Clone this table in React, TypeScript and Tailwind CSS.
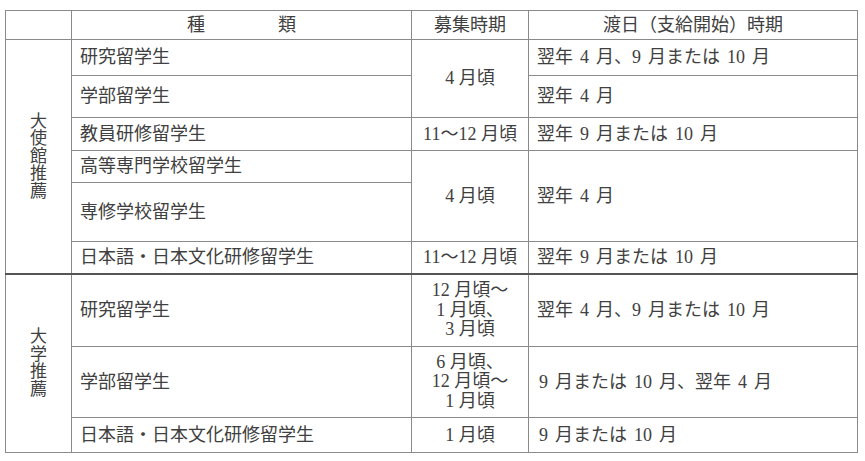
import React from "react";

const cell = "border border-[#8a8a8a] px-2 py-0 align-middle font-normal";
const center = `${cell} text-center`;
const date = `${cell} [word-spacing:2.5px]`;
const divider = "border-t-2 border-t-[#555]";

const Vertical = ({ text }: { text: string }) => (
    <div className="flex flex-col items-center text-[17px] leading-[17.5px]">
        {text.split("").map((c, i) => (
            <span key={i}>{c}</span>
        ))}
    </div>
);

const Lines = ({ lines }: { lines: string[] }) => (
    <div className="flex flex-col items-center leading-[19.5px]">
        {lines.map((l, i) => (
            <span key={i}>{l}</span>
        ))}
    </div>
);

export default function App() {
    return (
        <div className="w-[865px] h-[461px] bg-white pt-[10px] pl-[5px] text-[18px] text-[#404040] [font-family:'Liberation_Serif','Noto_Sans_CJK_JP',serif]">
            <table className="table-fixed border-collapse w-[852px]">
                <colgroup>
                    <col className="w-[66px]" />
                    <col className="w-[340px]" />
                    <col className="w-[117px]" />
                    <col className="w-[329px]" />
                </colgroup>
                <thead>
                    <tr className="h-[29px]">
                        <th className={cell}></th>
                        <th className={center}>
                            <div className="flex justify-center gap-[73px] leading-none">
                                <span>種</span>
                                <span>類</span>
                            </div>
                        </th>
                        <th className={`${center} px-0`}>募集時期</th>
                        <th className={center}>渡日（支給開始）時期</th>
                    </tr>
                </thead>
                <tbody>
                    <tr className="h-[36px]">
                        <td className={center} rowSpan={6}>
                            <Vertical text="大使館推薦" />
                        </td>
                        <td className={cell}>研究留学生</td>
                        <td className={center} rowSpan={2}>4 月頃</td>
                        <td className={date}>翌年 4 月、9 月または 10 月</td>
                    </tr>
                    <tr className="h-[42px]">
                        <td className={cell}>学部留学生</td>
                        <td className={date}>翌年 4 月</td>
                    </tr>
                    <tr className="h-[33px]">
                        <td className={cell}>教員研修留学生</td>
                        <td className={`${center} px-0 whitespace-nowrap`}>11～12 月頃</td>
                        <td className={date}>翌年 9 月または 10 月</td>
                    </tr>
                    <tr className="h-[32px]">
                        <td className={cell}>高等専門学校留学生</td>
                        <td className={center} rowSpan={2}>4 月頃</td>
                        <td className={date} rowSpan={2}>翌年 4 月</td>
                    </tr>
                    <tr className="h-[59px]">
                        <td className={cell}>専修学校留学生</td>
                    </tr>
                    <tr className="h-[32px]">
                        <td className={cell}>日本語・日本文化研修留学生</td>
                        <td className={`${center} px-0 whitespace-nowrap`}>11～12 月頃</td>
                        <td className={date}>翌年 9 月または 10 月</td>
                    </tr>
                    <tr className="h-[73px]">
                        <td className={`${center} ${divider}`} rowSpan={3}>
                            <Vertical text="大学推薦" />
                        </td>
                        <td className={`${cell} ${divider}`}>研究留学生</td>
                        <td className={`${center} ${divider} px-0`}>
                            <Lines lines={["12 月頃～", "1 月頃、", "3 月頃"]} />
                        </td>
                        <td className={`${date} ${divider}`}>翌年 4 月、9 月または 10 月</td>
                    </tr>
                    <tr className="h-[71px]">
                        <td className={cell}>学部留学生</td>
                        <td className={`${center} px-0`}>
                            <Lines lines={["6 月頃、", "12 月頃～", "1 月頃"]} />
                        </td>
                        <td className={`${date} pl-[10px]`}>9 月または 10 月、翌年 4 月</td>
                    </tr>
                    <tr className="h-[35px]">
                        <td className={cell}>日本語・日本文化研修留学生</td>
                        <td className={center}>1 月頃</td>
                        <td className={`${date} pl-[10px]`}>9 月または 10 月</td>
                    </tr>
                </tbody>
            </table>
        </div>
    );
}
